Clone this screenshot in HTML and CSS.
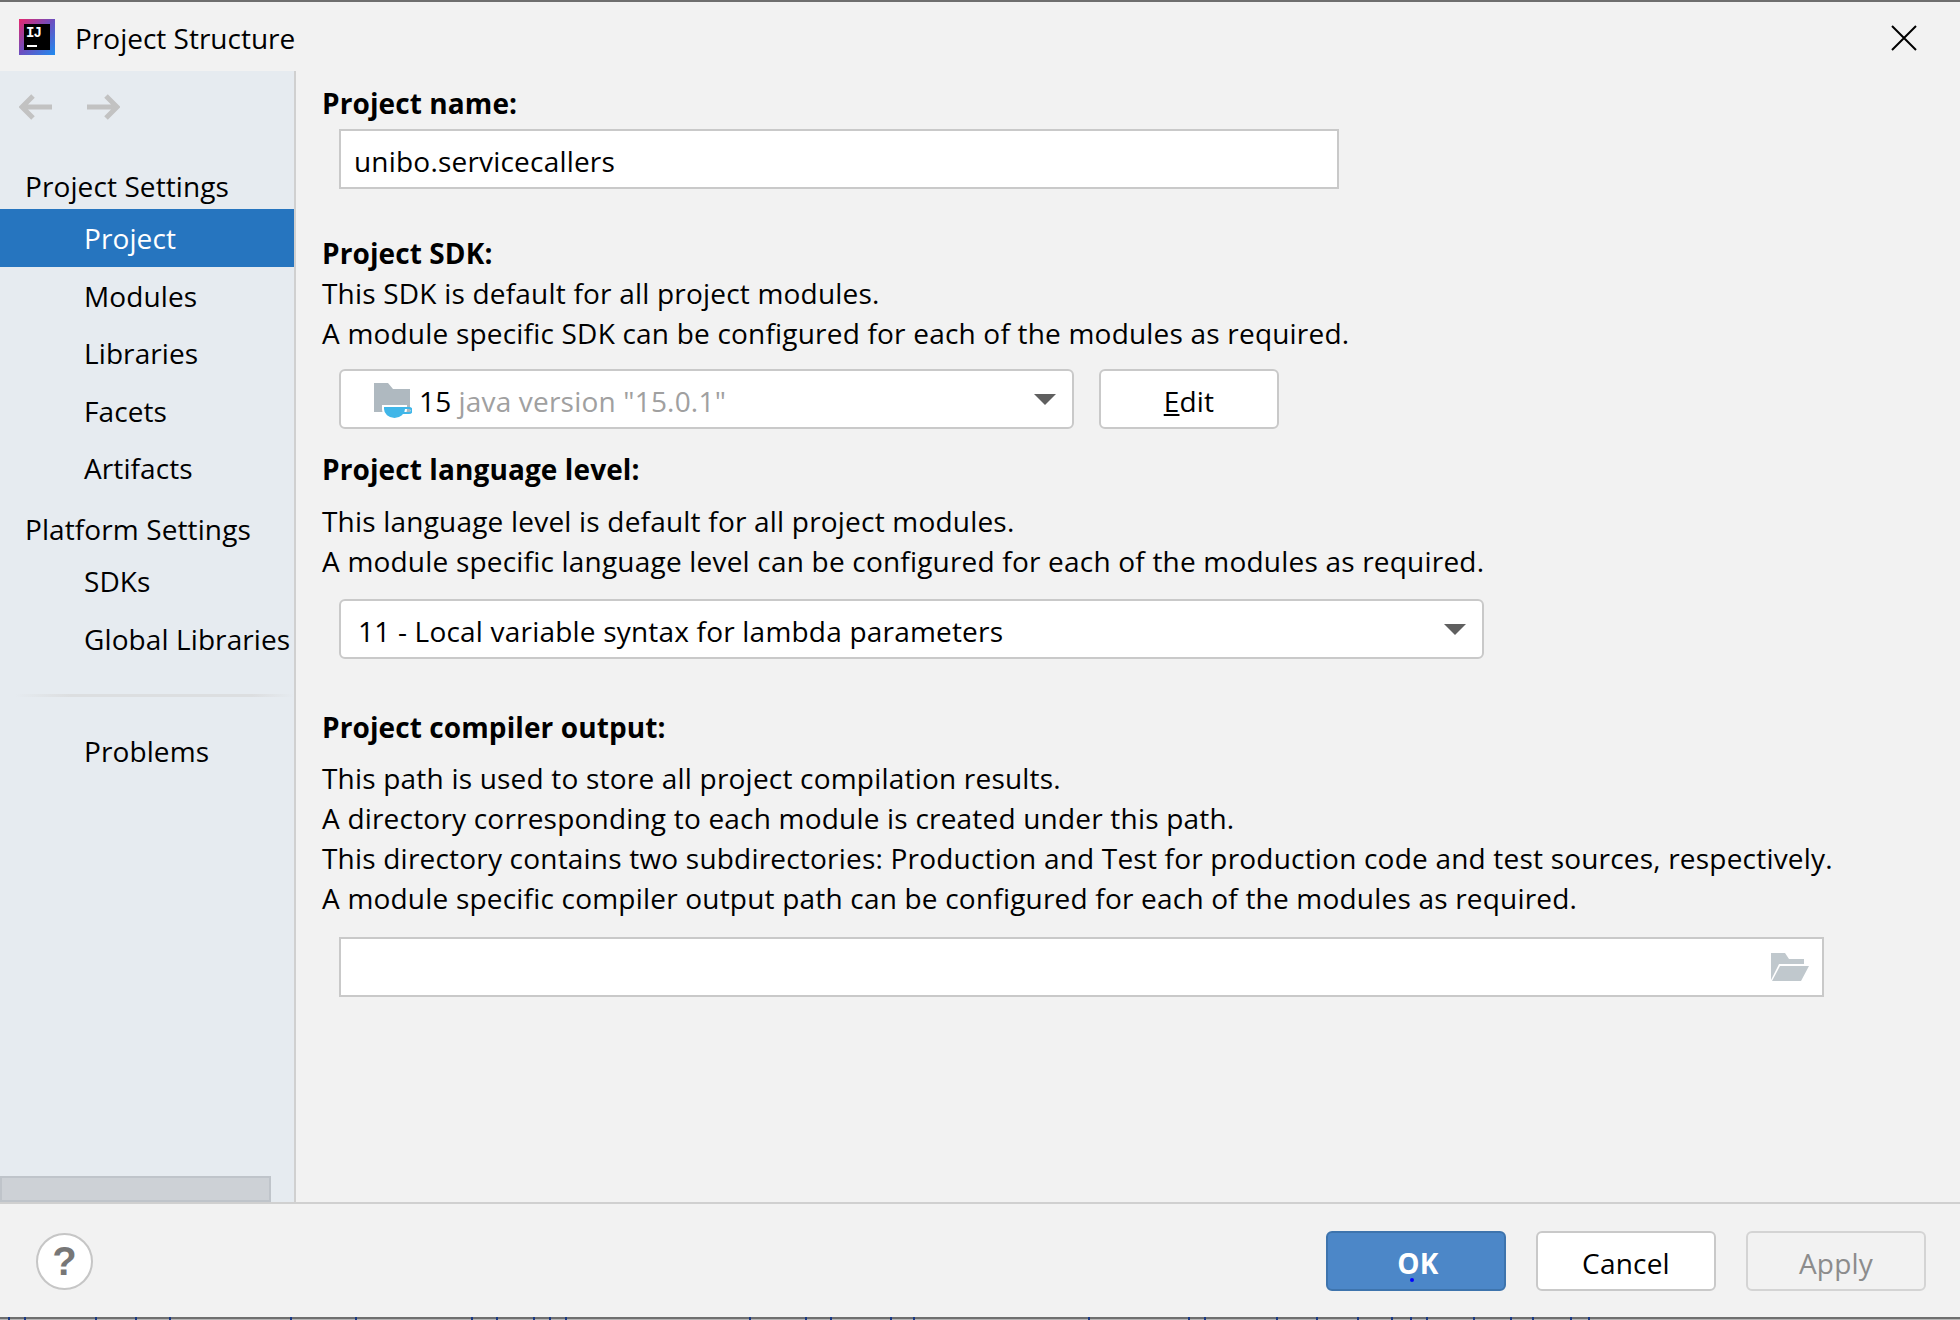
FILE: index.html
```html
<!DOCTYPE html>
<html lang="en">
<head>
  <meta charset="UTF-8">
  <title>Project Structure</title>
  <link rel="stylesheet" href="styles.css">
</head>
<body>
  <div id="dialog">
    <div id="titlebar">
      <svg class="app-icon" width="36" height="36" viewBox="0 0 36 36">
        <defs>
          <linearGradient id="ij" x1="0" y1="0" x2="1" y2="1">
            <stop offset="0" stop-color="#e8266c"/>
            <stop offset="0.5" stop-color="#6a4fc0"/>
            <stop offset="1" stop-color="#1f8cf0"/>
          </linearGradient>
        </defs>
        <rect width="36" height="36" fill="url(#ij)"/>
        <rect x="5" y="5" width="26" height="26" fill="#000"/>
        <text x="7" y="18" font-family="Liberation Mono" font-weight="700" font-size="14" letter-spacing="-1" fill="#fff">IJ</text>
        <rect x="8" y="26" width="10" height="2" fill="#fff"/>
      </svg>
      <span class="title">Project Structure</span>
      <svg class="close" width="26" height="26" viewBox="0 0 26 26">
        <path d="M1 1L25 25M25 1L1 25" stroke="#000" stroke-width="2" fill="none"/>
      </svg>
    </div>

    <div id="body">
      <div id="sidebar">
        <div class="nav-arrows">
          <svg width="34" height="26" viewBox="0 0 34 26"><path d="M33 13H3M14 2L3 13L14 24" stroke="#c2c2c2" stroke-width="5" fill="none"/></svg>
          <svg width="34" height="26" viewBox="0 0 34 26"><path d="M1 13H31M20 2L31 13L20 24" stroke="#c2c2c2" stroke-width="5" fill="none"/></svg>
        </div>
        <div class="group first">Project Settings</div>
        <div class="item selected">Project</div>
        <div class="item">Modules</div>
        <div class="item">Libraries</div>
        <div class="item">Facets</div>
        <div class="item">Artifacts</div>
        <div class="group">Platform Settings</div>
        <div class="item">SDKs</div>
        <div class="item">Global Libraries</div>
        <div class="divider"></div>
        <div class="item">Problems</div>
        <div class="hscroll"></div>
      </div>

      <div id="main">
        <div class="label first">Project name:</div>
        <div class="field name-field">unibo.servicecallers</div>

        <div class="label sdk-label">Project SDK:</div>
        <p>This SDK is default for all project modules.</p>
        <p>A module specific SDK can be configured for each of the modules as required.</p>
        <div class="row sdk-row">
          <div class="field combo sdk-combo">
            <svg class="jdk-icon" width="38" height="36" viewBox="0 0 38 36">
              <path d="M0 0H14L19 6H36V29H0Z" fill="#afb9c0"/>
              <path d="M9 23H32V26A11.500 10 0 0 1 9 26Z" fill="#40b6e8" stroke="#fff" stroke-width="2"/>
              <path d="M31 25H35A2.500 2.500 0 0 1 35 30H29" fill="none" stroke="#40b6e8" stroke-width="2"/>
            </svg>
            <span>15</span><span class="muted">java version "15.0.1"</span>
            <span class="caret"></span>
          </div>
          <div class="btn edit-btn"><span class="mnemonic">E</span>dit</div>
        </div>

        <div class="label lang-label">Project language level:</div>
        <p class="lang-first">This language level is default for all project modules.</p>
        <p>A module specific language level can be configured for each of the modules as required.</p>
        <div class="field combo lang-combo">
          <span>11 - Local variable syntax for lambda parameters</span>
          <span class="caret"></span>
        </div>

        <div class="label output-label">Project compiler output:</div>
        <p class="output-first">This path is used to store all project compilation results.</p>
        <p>A directory corresponding to each module is created under this path.</p>
        <p>This directory contains two subdirectories: Production and Test for production code and test sources, respectively.</p>
        <p>A module specific compiler output path can be configured for each of the modules as required.</p>
        <div class="field output-field">
          <svg class="folder-icon" width="38" height="28" viewBox="0 0 38 28">
            <path d="M0 0H14L18 6H33V11H8L0 27Z" fill="#c0c8cd"/>
            <path d="M9 13H38L30 28H1Z" fill="#c0c8cd"/>
          </svg>
        </div>
      </div>
    </div>

    <div id="footer">
      <div class="help">?</div>
      <div class="buttons">
        <div class="btn primary"><span class="ok-text">OK<i class="ok-dot"></i></span></div>
        <div class="btn">Cancel</div>
        <div class="btn disabled">Apply</div>
      </div>
    </div>
    <div id="edge">
      <!-- tops of the window behind, cut off by the dialog -->
      <svg width="1960" height="3" viewBox="0 0 1960 3">
        <path d="M9 0v3M25 0v3M96 0v3M136 0v3M170 0v3M291 0v3M356 0v3M472 0v3M497 0v3M534 0v3M550 0v3M566 0v3M750 0v3M806 0v3M831 0v3M891 0v3M914 0v3M1089 0v3M1189 0v3M1205 0v3M1277 0v3M1317 0v3M1358 0v3M1392 0v3M1411 0v3M1427 0v3M1474 0v3M1511 0v3M1533 0v3M1571 0v3M1589 0v3" stroke="#1b3a86" stroke-width="2"/>
      </svg>
    </div>
  </div>
</body>
</html>
```

FILE: styles.css
```css
html, body {
  margin: 0;
  height: 100%;
}

body {
  background: #f2f2f2;
  color: #000;
  font-family: "Open Sans", sans-serif;
  font-size: 28px;
  letter-spacing: 0.2px;
}

#dialog {
  display: flex;
  flex-direction: column;
  height: 1320px;
  border-top: 2px solid #6f6f6f;
  box-sizing: border-box;
  overflow: hidden;
}

#titlebar {
  display: flex;
  align-items: center;
  height: 69px;
  padding: 0 43px 0 19px;
  flex: none;
}

.title {
  margin-left: 20px;
  margin-top: 3px;
  letter-spacing: 0;
}

.close {
  margin-left: auto;
  margin-top: 2px;
}

#body {
  display: flex;
  height: 1131px;
  flex: none;
}

#sidebar {
  position: relative;
  width: 294px;
  background: #e6ebf0;
  border-right: 2px solid #d0d0d0;
  flex: none;
  letter-spacing: 0.1px;
}

.nav-arrows {
  display: flex;
  gap: 33px;
  padding: 23px 0 0 19px;
  height: 46px;
}

.group {
  height: 48px;
  line-height: 50px;
  padding-left: 25px;
  margin-top: 7.500px;
}

.group.first {
  margin-top: 21px;
}

.item {
  height: 57.500px;
  line-height: 59.500px;
  padding-left: 84px;
  white-space: nowrap;
}

.item.selected {
  background: #2675bf;
  color: #fff;
}

.divider {
  height: 3px;
  margin: 27px 0 25px 15px;
  background: linear-gradient(to right, #e6ebf0, #dcdee0 20%, #dcdee0 85%, #e6ebf0);
}

.hscroll {
  position: absolute;
  left: 0;
  bottom: 0;
  width: 267px;
  height: 22px;
  background: #cdd1d6;
  border: 2px solid #bfc4ca;
}

#main {
  flex: 1;
  padding-left: 26px;
}

.label {
  font-weight: 700;
  line-height: 40px;
  letter-spacing: 0.1px;
}

.label.first {
  margin-top: 12px;
}

p {
  margin: 0;
  line-height: 40px;
  white-space: nowrap;
}

.field {
  display: flex;
  align-items: center;
  box-sizing: border-box;
  height: 60px;
  background: #fff;
  border: 2px solid #c9c9c9;
  margin-left: 17px;
}

.name-field {
  width: 1000px;
  margin-top: 6px;
  padding: 3px 0 0 13px;
}

.sdk-label {
  margin-top: 44px;
}

.row {
  display: flex;
  gap: 25px;
  margin-top: 16px;
}

.combo {
  position: relative;
  border-radius: 6px;
  padding-top: 4px;
}

.sdk-combo {
  width: 735px;
  padding-left: 33px;
}

.jdk-icon {
  margin-right: 7px;
}

.muted {
  color: #a0a0a0;
  margin-left: 7px;
}

.caret {
  position: absolute;
  top: 23px;
  right: 16px;
  width: 0;
  height: 0;
  border-left: 11px solid transparent;
  border-right: 11px solid transparent;
  border-top: 11px solid #5f5f5f;
}

.btn {
  display: flex;
  align-items: center;
  justify-content: center;
  box-sizing: border-box;
  width: 180px;
  height: 60px;
  padding-top: 4px;
  background: #fff;
  border: 2px solid #c9c9c9;
  border-radius: 6px;
}

.mnemonic {
  text-decoration: underline;
}

.lang-label {
  margin-top: 20px;
}

.lang-first {
  margin-top: 12px;
}

.lang-combo {
  width: 1145px;
  margin-top: 18px;
  padding-left: 17px;
}

.output-label {
  margin-top: 48px;
}

.output-first {
  margin-top: 11px;
}

.output-field {
  width: 1485px;
  margin-top: 19px;
  justify-content: flex-end;
  padding-right: 13px;
}

#footer {
  display: flex;
  align-items: center;
  justify-content: space-between;
  flex: 1;
  border-top: 2px solid #d0d0d0;
  padding: 0 34px 0 36px;
}

.help {
  display: flex;
  align-items: center;
  justify-content: center;
  box-sizing: border-box;
  width: 57px;
  height: 57px;
  margin-top: 1px;
  background: #fff;
  border: 2px solid #c6c6c6;
  border-radius: 50%;
  color: #777;
  font-family: "Liberation Sans", sans-serif;
  font-weight: 700;
  font-size: 40px;
}

.buttons {
  display: flex;
  gap: 30px;
}

.btn.primary {
  background: #4c87c8;
  border-color: #3e74ad;
  color: #fff;
  font-weight: 700;
}

.ok-text {
  position: relative;
  left: 2px;
}

.ok-dot {
  position: absolute;
  left: 13px;
  bottom: 0;
  width: 4px;
  height: 4px;
  border-radius: 50%;
  background: #0000ff;
}

.btn.disabled {
  background: transparent;
  border-color: #d4d4d4;
  color: #8c8c8c;
}

#edge {
  height: 3px;
  flex: none;
  background: linear-gradient(#6f6f6f 2px, #b5b5b5 2px);
}

#edge svg {
  display: block;
}
```
